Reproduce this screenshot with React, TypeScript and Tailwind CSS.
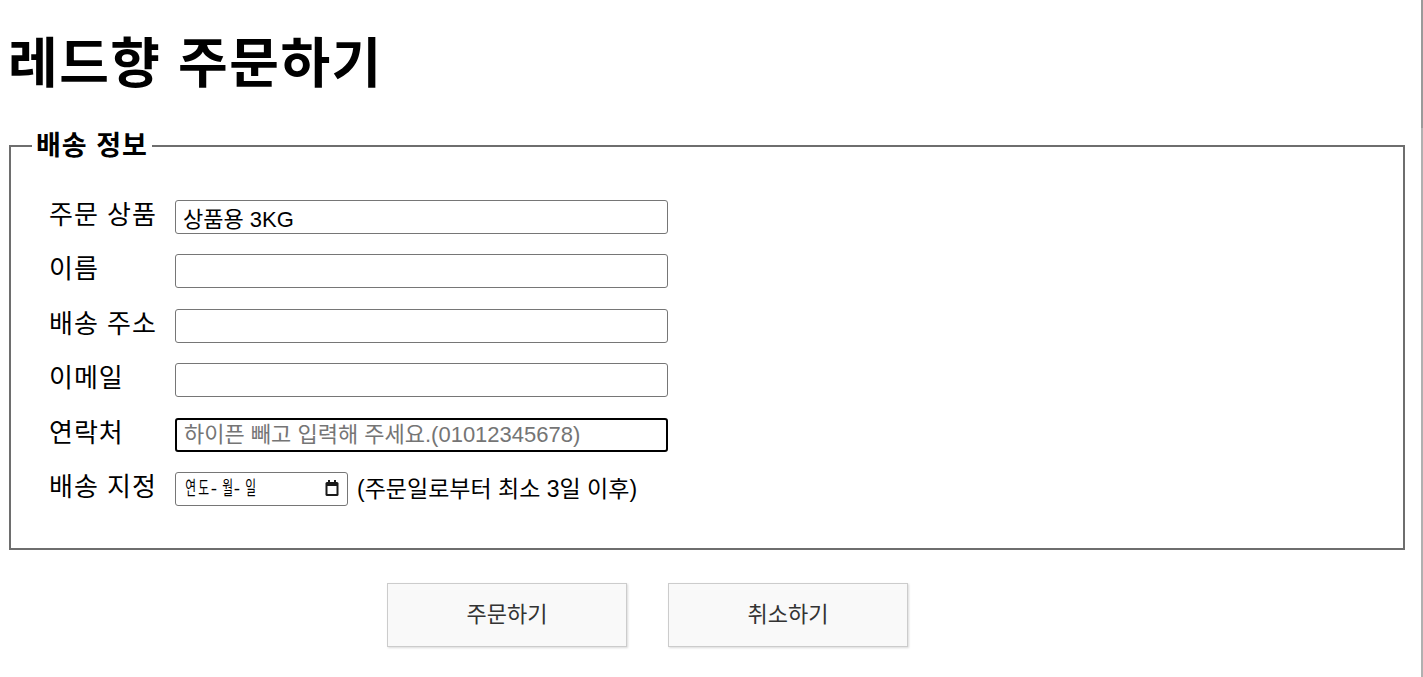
const font = "font-['Liberation_Sans','Noto_Sans_CJK_KR',sans-serif]";

function Row({ label, children }: { label: string; children: React.ReactNode }) {
  return (
    <div className="flex items-center h-[34px]">
      <span className="w-[126px] text-[26px] tracking-[1px] leading-[30px] -mt-[4px] text-black">{label}</span>
      {children}
    </div>
  );
}

function TextField({ value, placeholder, focused }: { value?: string; placeholder?: string; focused?: boolean }) {
  return (
    <input
      type="text"
      defaultValue={value}
      placeholder={placeholder}
      className={`w-[493px] h-[34px] px-[7px] text-[22px] text-black placeholder:text-[#757575] bg-white outline-none rounded-[3px] ${
        focused ? "border-2 border-black px-[6px]" : "border border-[#767676]"
      }`}
    />
  );
}

function CalendarIcon() {
  return (
    <svg width="16" height="17" viewBox="0 0 16 17" fill="none">
      <rect x="4" y="0" width="2" height="3" fill="#1a1a1a" />
      <rect x="10" y="0" width="2" height="3" fill="#1a1a1a" />
      <rect x="1.5" y="2" width="13" height="14" rx="1.5" fill="#1a1a1a" />
      <rect x="3.5" y="6" width="9" height="8" fill="#fff" />
    </svg>
  );
}

function Glyph({ ch, w }: { ch: string; w: string }) {
  return (
    <span className={`block shrink-0 text-center ${w}`}>
      <span className="inline-block scale-x-[0.62]">{ch}</span>
    </span>
  );
}

function DateField() {
  return (
    <div className="w-[173px] h-[34px] border border-[#767676] rounded-[3px] flex items-center pl-[6px] pr-[7px] bg-white">
      <div className="flex items-center text-[19px] leading-[22px] text-black">
        <Glyph ch="연" w="w-[13px]" />
        <Glyph ch="도" w="w-[14px]" />
        <span className="block w-[10px] shrink-0 text-center">-</span>
        <Glyph ch="월" w="w-[13px]" />
        <span className="block w-[10px] shrink-0 text-center">-</span>
        <Glyph ch="일" w="w-[13px]" />
      </div>
      <div className="ml-auto flex items-center">
        <CalendarIcon />
      </div>
    </div>
  );
}

export default function App() {
  return (
    <div className={`flex w-[1423px] h-[677px] bg-white overflow-hidden ${font}`}>
      <div className="w-[1421px] pl-[8px]">
        <h1 className="text-[54px] tracking-[1.5px] font-bold leading-[64px] mt-[32px] text-black">레드향 주문하기</h1>

        <fieldset className="ml-[1px] w-[1396px] mt-[36px] border-2 border-[#6e6e6e] pb-[42px]">
          <legend className="ml-[21px] px-[4px] text-[27px] tracking-[1px] leading-[28px] font-bold text-black">배송 정보</legend>

          <div className="flex flex-col gap-[20.4px] pl-[38px] pt-[40px]">
            <Row label="주문 상품">
              <TextField value="상품용 3KG" />
            </Row>
            <Row label="이름">
              <TextField />
            </Row>
            <Row label="배송 주소">
              <TextField />
            </Row>
            <Row label="이메일">
              <TextField />
            </Row>
            <Row label="연락처">
              <TextField placeholder="하이픈 빼고 입력해 주세요.(01012345678)" focused />
            </Row>
            <Row label="배송 지정">
              <DateField />
              <span className="ml-[9px] text-[23px] text-black">(주문일로부터 최소 3일 이후)</span>
            </Row>
          </div>
        </fieldset>

        <div className="flex gap-[41px] pl-[379px] mt-[33px]">
          <button className="w-[240px] h-[64px] bg-[#f9f9f9] border border-[#cccccc] shadow-[1px_1px_2px_rgba(0,0,0,0.15)] text-[22px] text-[#333]">
            주문하기
          </button>
          <button className="w-[240px] h-[64px] bg-[#f9f9f9] border border-[#cccccc] shadow-[1px_1px_2px_rgba(0,0,0,0.15)] text-[22px] text-[#333]">
            취소하기
          </button>
        </div>
      </div>
      <div className="w-[2px] flex flex-col">
        <div className="h-[128px] bg-[#9a9a9a]" />
        <div className="flex-1 bg-[#b0b0b0]" />
      </div>
    </div>
  );
}
